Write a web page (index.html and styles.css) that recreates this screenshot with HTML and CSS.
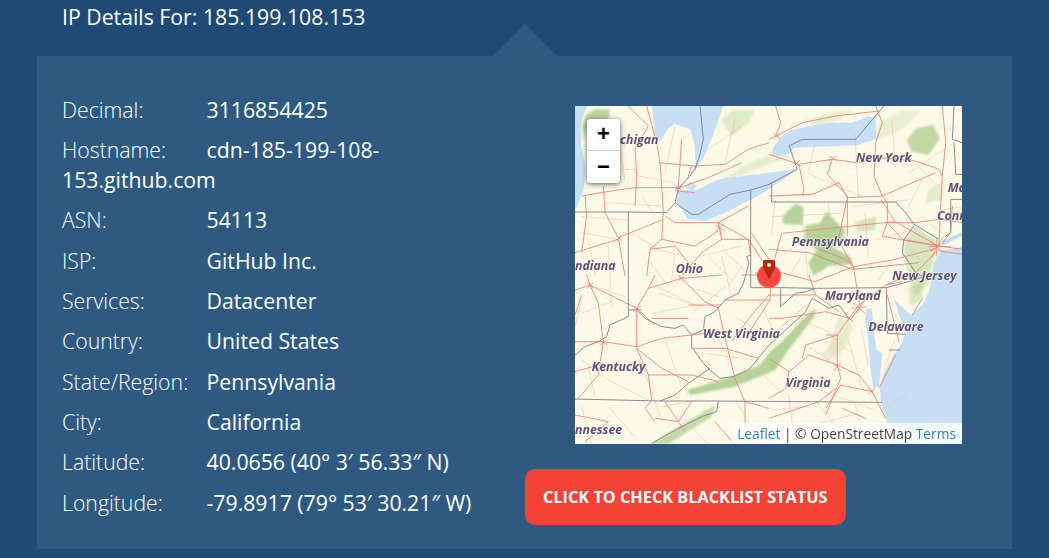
FILE: index.html
```html
<!DOCTYPE html>
<html lang="en">
<head>
<meta charset="utf-8">
<title>IP Details</title>
<link rel="stylesheet" href="styles.css">
</head>
<body>
<h2 class="title">IP Details For: 185.199.108.153</h2>
<section class="panel">
  <div class="info">
    <p class="row"><span class="key">Decimal:</span>3116854425</p>
    <p class="row"><span class="key">Hostname:</span>cdn-185-199-108-153.github.com</p>
    <p class="row"><span class="key">ASN:</span>54113</p>
    <p class="row"><span class="key">ISP:</span>GitHub Inc.</p>
    <p class="row"><span class="key">Services:</span>Datacenter</p>
    <p class="row"><span class="key">Country:</span>United States</p>
    <p class="row"><span class="key">State/Region:</span>Pennsylvania</p>
    <p class="row"><span class="key">City:</span>California</p>
    <p class="row"><span class="key">Latitude:</span>40.0656 (40° 3′ 56.33″ N)</p>
    <p class="row"><span class="key">Longitude:</span>-79.8917 (79° 53′ 30.21″ W)</p>
  </div>
  <div class="side">
    <div class="map">
      <svg class="tiles" viewBox="0 18 1161 1014" preserveAspectRatio="none">
        <defs>
          <filter id="soft"><feGaussianBlur stdDeviation="1.4"/></filter>
          <filter id="softer"><feGaussianBlur stdDeviation="0.8"/></filter>
          <filter id="wide" x="-5%" y="-5%" width="110%" height="110%"><feGaussianBlur stdDeviation="3.5"/></filter>
        </defs>
        <rect x="0" y="18" width="1161" height="1014" fill="#fcfae6"/>
        <g class="forest" filter="url(#wide)">
          <path d="M22 80 32 45 60 28 105 28 100 55 60 70 35 90 28 120Z" opacity=".95"/>
          <path d="M622 350 660 312 685 320 682 375 625 372Z"/>
          <path d="M690 378 735 368 755 335 790 372 812 392 800 420 770 440 825 470 835 492 760 498 715 528 700 490 725 450 690 420Z"/>
          <path d="M995 120 1025 85 1075 75 1095 115 1060 165 1010 155Z" opacity=".85"/>
          <path d="M1000 410 1020 380 1085 420 1075 480 1060 550 1020 590 1000 530 985 440Z" opacity=".5"/>
          <path d="M555 795 585 755 625 720 700 640 722 625 718 650 640 750 600 810 480 860 345 885 335 870 470 830Z"/>
          <path d="M230 1030 320 975 420 915 410 950 330 1000 280 1032Z" opacity=".8"/>
          <path d="M840 365 905 350 900 390 845 395Z" opacity=".55"/>
          <path d="M440 240 500 200 590 160 640 150 640 175 560 200 470 240Z" opacity=".3"/>
          <path d="M440 60 470 30 540 30 520 70 470 110Z" opacity=".4"/>
          <path d="M690 60 760 40 830 30 790 60 710 75Z" opacity=".3"/>
          <path d="M880 90 980 30 1040 30 980 90 900 120Z" opacity=".25"/>
          <path d="M790 650 835 670 820 730 780 780 760 750Z" opacity=".3"/>
          <path d="M1000 560 1045 545 1040 600 1005 620Z" opacity=".45"/>
          <path d="M1060 270 1110 240 1100 300 1050 310Z" opacity=".35"/>
          <path d="M740 770 770 720 790 740 760 790Z" opacity=".25"/>
        </g>
        <g filter="url(#soft)">
          <g class="water">
            <path d="M0 18H36L20 60 18 130 32 205 26 268 5 323H0Z"/>
            <path d="M232 18 238 100 255 125 280 85 300 72 345 88 358 128 362 188 350 218 322 262 345 232 365 203 390 165 420 90 445 18Z"/>
            <path d="M330 262 345 245 366 258 350 272Z"/>
            <path d="M310 273 370 268 430 238 582 218 662 208 667 208 632 233 582 268 530 298 450 338 390 363 340 358 305 308Z"/>
            <path d="M592 168 642 163 657 143 842 136 902 118 902 58 882 48 832 68 762 68 702 78 642 93 612 118 592 148Z"/>
            <path d="M1102 423 1161 395V408L1105 436Z"/>
            <path d="M1161 440 1100 452 1075 490 1072 525 1062 575 1042 615 1007 645 985 625 958 598 970 640 992 695 982 725 957 765 927 815 915 860 917 905 937 965 945 1032H1161Z"/>
            <path d="M875 625 890 625 897 700 905 750 922 760 912 860 895 865 885 800 880 720 870 660Z"/>
          </g>
          <g class="minor">
            <path d="M100 40 150 140M60 138 170 128M30 208 180 208M190 228 300 248M200 288 240 348M90 308 260 318M20 398 130 418M40 418 60 528M170 398 250 448M300 458 290 538M380 468 500 438M450 458 520 518M270 218 300 78M400 148 500 78M480 58 450 188M120 60 150 240M20 350 160 360"/>
            <path d="M60 560 150 590M100 440 110 620M220 440 330 470M220 480 280 560M340 560 430 590M400 470 470 540M460 560 500 500M250 580 380 620M120 600 20 640M20 600 0 680M230 640 340 620M350 640 450 560M440 470 470 590M225 550 350 610"/>
            <path d="M590 350 800 340M700 220 860 290M680 340 700 540M830 320 1000 300M840 100 850 290M1000 220 1150 120M910 540 960 470M690 620 620 680M590 400 600 300M640 450 700 420M640 530 680 470M760 310 770 440M870 340 880 470M900 420 1010 390M1000 320 1040 240M600 290 720 280M720 130 700 210M950 60 960 180M1020 190 1090 260M1100 330 1161 320M1000 440 1060 510M1040 350 1100 400"/>
            <path d="M390 760 540 780M210 820 260 960M100 840 220 900M480 900 560 1032M20 780 100 840M40 800 60 890M270 720 320 860M420 690 460 780M480 650 560 700M550 600 590 680M100 920 180 1010M20 920 50 1032M260 920 370 900M310 940 400 1032"/>
            <path d="M680 850 900 930M960 640 990 700M1000 880 920 930M620 1000 850 940M700 610 620 680M660 650 770 700M760 700 830 760M700 740 790 800M640 880 660 1032M720 900 800 1000M540 800 620 880M860 690 880 800M820 720 860 860M840 910 870 1032M960 720 930 800M590 930 700 920"/>
          </g>
          <g class="roads">
            <g transform="translate(0 18)">
              <path d="M20 270 90 258 180 245 310 245M250 170 360 180 450 175 520 130 582 110M160 0 220 60 180 130 185 210 180 300M215 0 245 110 255 170 260 240 265 320 260 400 225 430 215 510M270 330 300 350 430 350 520 400 527 450M130 395 265 340M30 270 35 330 20 440M85 240 90 320 130 395 150 510M130 400 0 440M225 430 300 420 340 470M260 400 360 420 430 375M430 350 440 400 380 440 320 510M300 250 400 215 500 170M310 255 360 260M430 350 520 300M440 400 520 400 560 460 590 500M310 245 320 100M350 180 340 210"/>
              <path d="M0 145 90 175 190 160 265 170 330 155 440 165 510 190" transform="translate(582 0)"/>
              <path d="M90 175 105 250 100 270M0 100 20 90 100 50 200 30 330 15M0 270 130 265 210 230 235 275 340 270 500 200M175 205 235 270 235 390M190 160 175 205M320 0 340 50 320 110 315 210 340 270 355 290 355 350 400 400 510 420M20 0 35 50 20 90M0 430 120 440 250 490 350 480 450 470M150 430 230 460 260 490M355 350 340 390 390 400 510 420M510 420 582 430M510 435 582 445M440 500 510 430M582 350 510 340 440 350 355 350M510 190 520 210 515 300 510 420M520 0 530 110 520 210M520 410 545 380 550 300" transform="translate(582 0)"/>
            </g>
            <g transform="translate(0 525)">
              <path d="M35 0 45 30 70 85 85 200 70 300 10 370M0 45 45 30 185 100 220 40 320 10 440 0M320 10 390 80 430 100M185 100 185 220 220 300 230 375 210 400 240 440M185 100 240 150M0 200 85 200 185 215 260 190 350 180M185 220 260 280 300 300 340 320M0 290 70 270M430 100 460 230 480 310 510 380 510 510M582 60 530 120 470 200M500 0 582 0M350 380 310 440 240 430M0 420 100 440 30 500M220 40 240 0M320 10 310 0M350 180 440 170M340 90 440 90M350 220 450 220 550 250M20 60 0 120M230 130 340 130M220 300 350 300 430 320M270 380 330 470M510 380 582 400M420 440 480 510"/>
              <path d="M240 130 205 180 205 270 215 310 170 420M205 270 120 240 60 290 50 340 0 370M205 270 270 300 310 350M310 350 350 430M310 350 215 330 170 400M240 130 170 110 40 130 0 130M240 130 270 90 350 30 400 20M210 110 140 60M355 60 370 120 390 200M460 70 430 120M205 180 110 210 100 250M0 430 150 380 200 340M140 60 120 0M0 60 70 60 140 60M350 30 420 0M60 290 0 250M220 400 290 430M380 240 330 340M170 180 205 180" transform="translate(582 0)"/>
            </g>
            <path d="M590 490 530 400M590 510 620 400 760 385 960 365 1085 435M590 510 720 545 835 500 950 480 1085 445M590 510 585 600 520 700M585 600 450 600M835 500 855 620 830 655M835 500 790 420 815 300M540 520 590 510M960 365 920 300"/>
          </g>
          <g class="roads tangle">
            <path d="M298 255 322 272M300 272 320 254M310 250V280M420 375 448 392M428 365 440 405M420 395 448 372M1062 440H1125M1085 415V470M1065 425 1110 460M1065 455 1110 425M1070 470 1105 410M835 610 870 640M845 640 865 605M830 625 875 620M815 650 835 665M815 665 835 648M175 615 198 638M175 635 198 618M172 628H200M595 100 618 118M595 120 615 100M655 185 678 200M655 200 675 180M35 548 55 565M35 565 55 548M75 720 98 735M75 735 98 720M775 790 797 812M775 812 797 790M878 865 900 885M878 885 900 865M310 528 326 542M310 542 326 528M760 168 785 182M760 182 785 168M125 408 140 422M125 422 140 408"/>
          </g>
          <g class="borders">
            <path d="M0 336H160L275 338 300 308 350 343 370 343 465 283 527 270 582 253 667 208 657 178 642 138 682 118 842 118 927 18"/>
            <path d="M375 18 385 118 375 163 360 208 335 238 310 268 300 308"/>
            <path d="M160 336V630"/>
            <path d="M527 270V563H617L722 565 934 563"/>
            <path d="M590 248V306H962L992 338 1017 373 1092 418"/>
            <path d="M1017 378 987 418 982 458 1022 518 1045 530 1000 545 934 563"/>
            <path d="M527 465 515 470 522 490 505 550 490 580 450 600 420 635 390 650 385 690 350 705 325 675 300 685 260 680 210 655 185 630H160V650L105 675 95 710 70 725 30 740 0 765"/>
            <path d="M350 705V740L385 790 405 810 435 835 475 830 520 810 550 775 582 735 632 690 692 635 712 595"/>
            <path d="M712 595 762 625 792 615 822 655"/>
            <path d="M405 805 340 850 300 885 255 903"/>
            <path d="M0 897 255 903H430L922 907"/>
            <path d="M617 565V620L662 580 692 575 722 565"/>
            <path d="M934 565 937 700 992 703"/>
            <path d="M942 750H977"/>
            <path d="M430 903 425 935 380 950 310 985 230 1030"/>
            <path d="M1137 18 1132 118 1161 128M1137 128 1142 223H1161M1127 298V398L1112 408M1127 298H1161"/>
          </g>
        </g>
        <g class="labels" filter="url(#softer)">
          <text x="135" y="132">chigan</text>
          <text x="843" y="186">New York</text>
          <text x="1118" y="275">Ma</text>
          <text x="1086" y="360">Conn</text>
          <text x="650" y="438">Pennsylvania</text>
          <text x="0" y="511">ndiana</text>
          <text x="302" y="520">Ohio</text>
          <text x="952" y="541">New Jersey</text>
          <text x="750" y="601">Maryland</text>
          <text x="880" y="692">Delaware</text>
          <text x="384" y="715">West Virginia</text>
          <text x="50" y="812">Kentucky</text>
          <text x="632" y="862">Virginia</text>
          <text x="0" y="1003">nnessee</text>
        </g>
      </svg>
      <div class="pulse"></div>
      <svg class="pin" viewBox="0 0 12 19"><path fill="#b5280e" d="M0 1.5Q0 0 1.5 0H10.5Q12 0 12 1.5V7.5Q12 9 10.8 10.2L6 19 1.2 10.2Q0 9 0 7.5Z"/><circle cx="6" cy="5" r="2" fill="#fbe9dc"/></svg>
      <div class="zoom">
        <button class="zoom-btn zoom-in" type="button">+</button>
        <button class="zoom-btn" type="button">−</button>
      </div>
      <div class="attribution"><a>Leaflet</a> | © OpenStreetMap <a>Terms</a></div>
    </div>
    <a class="check">CLICK TO CHECK BLACKLIST STATUS</a>
  </div>
</section>
</body>
</html>
```
FILE: styles.css
```css
* { box-sizing: border-box; }
html, body { height: 100%; }
body {
  margin: 0;
  height: 558px;
  overflow: hidden;
  background: #1f4a75;
  color: #fff;
  font-family: "Open Sans", sans-serif;
  padding: 0 37px;
}
.title {
  margin: 0;
  height: 56px;
  padding: 2px 0 0 25px;
  font-size: 21.25px;
  line-height: 30px;
  font-weight: 400;
  position: relative;
}
.title::after {
  content: "";
  position: absolute;
  left: 456px;
  bottom: 0;
  border-left: 32px solid transparent;
  border-right: 32px solid transparent;
  border-bottom: 32px solid #2e5a81;
}
.panel {
  width: 975px;
  height: 493px;
  background: #2e5a81;
  display: flex;
  padding: 38.6px 0 0 25px;
}
.info { width: 425px; flex: none; }
.row {
  margin: 0 0 10.35px;
  font-size: 21.25px;
  line-height: 30px;
}
.key {
  display: inline-block;
  width: 144.5px;
  font-weight: 300;
}
.side {
  margin-left: 38px;
  display: flex;
  flex-direction: column;
  align-items: flex-start;
  padding-top: 11.4px;
}
.map {
  position: relative;
  margin-left: 50px;
  width: 387px;
  height: 338px;
  overflow: hidden;
  flex: none;
}
.tiles { display: block; width: 387px; height: 338px; }
.water { fill: #c6dff5; }
.forest { fill: #b4d198; }
.roads { fill: none; stroke: #ee8079; stroke-width: 2.6; stroke-linejoin: round; }
.minor { fill: none; stroke: #f2b8a6; stroke-width: 1.6; }
.tangle { stroke-width: 2.2; }
.borders { fill: none; stroke: #8b8799; stroke-width: 3; stroke-linejoin: round; }
.labels {
  font-family: "Open Sans", sans-serif;
  font-size: 37px;
  font-style: italic;
  font-weight: 700;
  fill: #5c5078;
  stroke: #fcfae6;
  stroke-width: 3px;
  paint-order: stroke;
}
.pulse {
  position: absolute;
  left: 182px;
  top: 158px;
  width: 24px;
  height: 24px;
  border-radius: 50%;
  background: radial-gradient(circle, #f4473f 55%, #f8605c 75%, #f97a74 100%);
}
.pin {
  position: absolute;
  left: 188px;
  top: 154px;
  width: 12px;
  height: 19px;
}
.zoom {
  position: absolute;
  left: 12px;
  top: 13px;
  width: 33px;
  border-radius: 4px;
  box-shadow: 0 1px 5px rgba(0, 0, 0, .65);
  overflow: hidden;
}
.zoom-btn {
  display: block;
  width: 33px;
  height: 32px;
  padding: 0;
  border: 0;
  background: #fff;
  color: #000;
  font-family: "Liberation Sans", sans-serif;
  font-size: 22px;
  font-weight: 700;
  line-height: 30px;
}
.zoom-in { height: 32px; border-bottom: 1px solid #ccc; }
.attribution {
  position: absolute;
  right: 0;
  bottom: 0;
  padding: 0 6px;
  height: 21px;
  font-size: 13.75px;
  line-height: 21px;
  color: #444;
  background: rgba(255, 255, 255, .8);
  white-space: nowrap;
}
.attribution a { color: #2d84b3; }
.check {
  margin-top: 25px;
  display: block;
  height: 56px;
  padding: 0 19px 0 18px;
  border-radius: 10px;
  background: #f44336;
  color: #fff;
  font-size: 16.3px;
  font-weight: 700;
  line-height: 56px;
  white-space: nowrap;
}
```
